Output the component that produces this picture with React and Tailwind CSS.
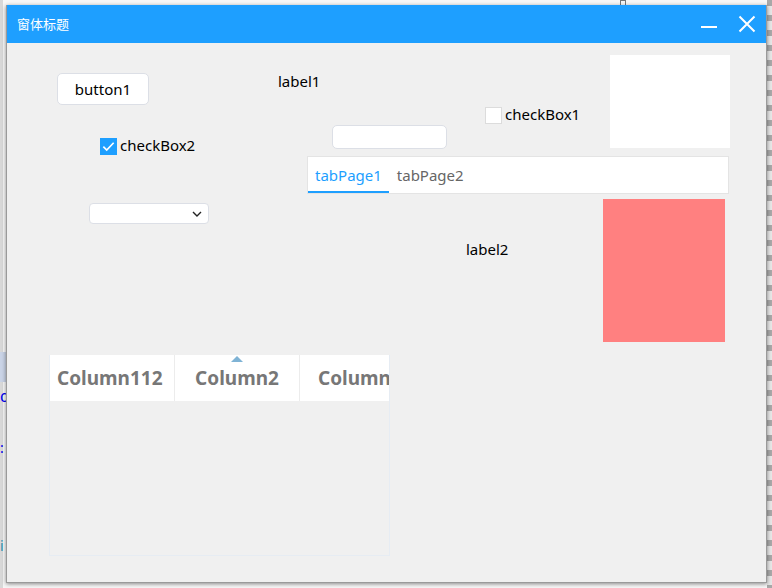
import React from "react";

const font = "font-['Noto_Sans','Open_Sans','Noto_Sans_CJK_SC',sans-serif]";

function CheckBox({ checked, label, className }) {
  return (
    <div className={`absolute flex items-center gap-[3px] ${className}`}>
      {checked ? (
        <span className="w-[17px] h-[17px] bg-[#1e9fff] flex items-center justify-center">
          <svg viewBox="0 0 16 16" className="w-[15px] h-[15px]" fill="none" stroke="white" strokeWidth="1.8">
            <path d="M2.5 8.2l3.6 3.6L13.5 4" />
          </svg>
        </span>
      ) : (
        <span className="w-[17px] h-[17px] bg-white border border-[#dcdcdc]" />
      )}
      <span className="text-[15px] leading-5 text-black -translate-y-[1px]">{label}</span>
    </div>
  );
}

export default function App() {
  return (
    <div className={`relative w-[772px] h-[588px] overflow-hidden bg-[#f7f7f7] ${font}`}>
      {/* background fragments behind the window */}
      <div className="absolute left-0 top-0 w-[3px] h-[588px] bg-[#d8d8d8]" />
      <div className="absolute left-0 top-[352px] w-[6px] h-[30px] bg-[#c9d3e6]" />
      <div className="absolute left-0 top-[388px] text-[#0000ee] text-[16px] leading-4">d</div>
      <div className="absolute left-0 top-[440px] text-[#0000ee] text-[14px] leading-4">:</div>
      <div className="absolute left-0 top-[538px] text-[#1f8fb0] text-[14px] leading-4">i</div>
      <div className="absolute right-0 top-0 w-[5px] h-[588px] bg-[repeating-linear-gradient(to_bottom,#a8a8a8_0px,#a8a8a8_6px,#e6e6e6_6px,#e6e6e6_15px)]" />
      <div className="absolute left-[620px] top-0 w-[6px] h-[6px] border border-[#777]" />

      {/* window */}
      <div className="absolute left-[6px] top-[5px] w-[761px] h-[578px] flex flex-col bg-[#f0f0f0] border-l border-b border-r border-[#9a9a9a] shadow-[0_1px_4px_rgba(0,0,0,0.45)]">
        <div className="h-[38px] shrink-0 bg-[#1e9fff] flex items-center justify-between pl-[10px] pr-[10px]">
          <span className="text-white text-[13px] font-['Noto_Sans_CJK_SC',sans-serif]">窗体标题</span>
          <div className="flex items-center gap-[20px]">
            <svg viewBox="0 0 18 18" className="w-[18px] h-[18px]" stroke="white" strokeWidth="2">
              <path d="M1 12h16" />
            </svg>
            <svg viewBox="0 0 18 18" className="w-[18px] h-[18px]" stroke="white" strokeWidth="2" fill="none">
              <path d="M1.5 1.5l15 15M16.5 1.5l-15 15" />
            </svg>
          </div>
        </div>

        {/* form canvas: controls sit at their designer coordinates */}
        <div className="relative flex-1">
          <button className="absolute left-[50px] top-[30px] w-[92px] h-[32px] bg-white border border-[#dcdfe6] rounded-[5px] text-[15px] text-black">
            button1
          </button>

          <span className="absolute left-[271px] top-[28px] text-[15px] leading-5 text-black">label1</span>

          <CheckBox label="checkBox1" className="left-[478px] top-[62px]" />

          <div className="absolute left-[603px] top-[12px] w-[120px] h-[93px] bg-white" />

          <div className="absolute left-[325px] top-[82px] w-[115px] h-[24px] bg-white border border-[#dcdfe6] rounded-[5px]" />

          <CheckBox checked label="checkBox2" className="left-[93px] top-[93px]" />

          <div className="absolute left-[300px] top-[113px] w-[422px] h-[38px] bg-white border border-[#e4e4e4] flex items-stretch">
            <div className="relative flex items-center px-[7px] text-[15px] text-[#1e9fff]">
              tabPage1
              <span className="absolute left-0 right-0 bottom-0 h-[2px] bg-[#1e9fff]" />
            </div>
            <div className="flex items-center px-[8px] text-[15px] text-[#666]">tabPage2</div>
          </div>

          <div className="absolute left-[82px] top-[160px] w-[120px] h-[21px] bg-white border border-[#dcdfe6] rounded-[4px] flex items-center justify-end pr-[5px]">
            <svg viewBox="0 0 12 12" className="w-[12px] h-[12px]" fill="none" stroke="#222" strokeWidth="1.4">
              <path d="M2 4l4 4 4-4" />
            </svg>
          </div>

          <span className="absolute left-[459px] top-[196px] text-[15px] leading-5 text-black">label2</span>

          <div className="absolute left-[596px] top-[156px] w-[122px] h-[143px] bg-[#ff8080]" />

          <div className="absolute left-[42px] top-[312px] w-[341px] h-[201px] border-l border-b border-r border-[#e6ecf3] overflow-hidden">
            <div className="h-[46px] bg-white flex text-[19px] font-bold text-[#777] whitespace-nowrap">
              <div className="w-[125px] shrink-0 flex items-center pl-[7px] border-r border-[#ececec]">Column112</div>
              <div className="relative w-[125px] shrink-0 flex items-center justify-center border-r border-[#ececec]">
                <span className="absolute top-[1px] left-[56px] w-0 h-0 border-l-[6px] border-r-[6px] border-b-[6px] border-l-transparent border-r-transparent border-b-[#7fb3d5]" />
                Column2
              </div>
              <div className="w-[125px] shrink-0 flex items-center pl-[18px]">Column3</div>
            </div>
          </div>
        </div>
      </div>
    </div>
  );
}
